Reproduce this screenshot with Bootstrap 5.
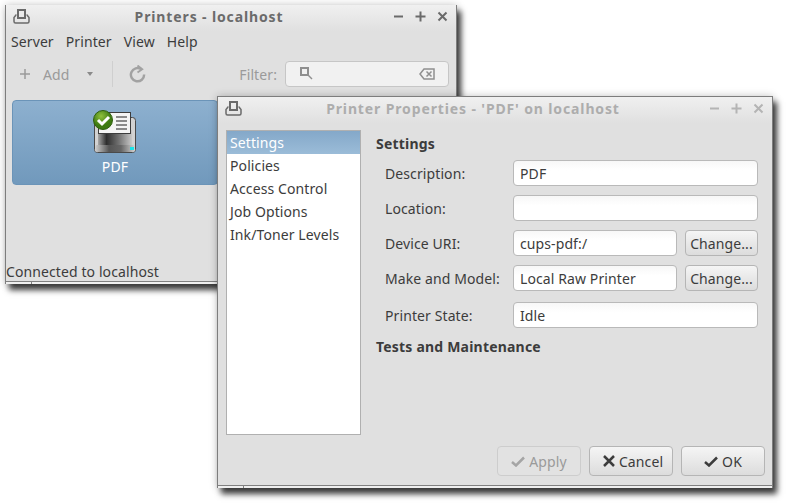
<!DOCTYPE html>
<html lang="en">
<head>
<meta charset="utf-8">
<title>Printers - localhost</title>
<link href="https://cdn.jsdelivr.net/npm/bootstrap@5.3.2/dist/css/bootstrap.min.css" rel="stylesheet">
<style>
html, body { margin: 0; width: 787px; height: 503px; overflow: hidden; background: #fff; }
body { font-family: "Noto Sans", "Open Sans", sans-serif; font-size: 14px; letter-spacing: .1px; color: #3c3c3c; position: relative; }
.desk-win { position: absolute; background: #e0e0e0; border: 1px solid #7d7d7d; border-bottom: 0; box-shadow: 0 0 8px rgba(0,0,0,.22), 4px 6px 6px rgba(0,0,0,.75); display: flex; flex-direction: column; }
.win-main { left: 5px; top: 5px; width: 452px; height: 279px; border-top: 0; }
.win-props { left: 217px; top: 96px; width: 556px; height: 392px; }
.title-bar { height: 26px; flex: none; background: linear-gradient(#f0f0f0, #e0e0e0); padding: 0 7px 4px 7px; display: flex; align-items: center; }
.title-text { flex: 1; margin-right: 4px; text-align: center; font-weight: 700; font-size: 14px; color: #6b6b6b; letter-spacing: .87px; }
.win-props .title-text { color: #adadad; }
.win-ctrls { display: flex; gap: 9px; }
.menu-row { display: flex; gap: 12px; padding: 1px 5px 0; line-height: 20px; color: #3c3c3c; }
.tool-row { display: flex; align-items: center; height: 32px; margin-top: 6px; padding: 0 7px 0 14px; color: #9a9a9a; }
.tool-add { margin-left: 13px; margin-right: 18px; }
.tool-sep { width: 1px; height: 26px; background: #cfcfcf; margin: 0 16px 0 19px; }
.filter-box { width: 164px; height: 26px; margin-left: 8px; background: #f1f1f1; border: 1px solid #c6c6c6; border-radius: 4px; display: flex; align-items: center; justify-content: space-between; padding: 0 13px 0 14px; }
.icon-area { flex: 1; padding: 10px 6px 0; }
.printer-tile { width: 206px; height: 85px; background: linear-gradient(#8db0cf, #7199bc); border: 1px solid #6b94b8; border-radius: 4px; color: #fff; text-align: center; padding-top: 9px; line-height: 20px; }
.printer-tile svg { display: block; margin: 0 auto 3px; }
.status-row { padding: 0; line-height: 19px; color: #3c3c3c; }
.grip-strip { height: 3px; flex: none; background: #efefef; border-top: 1px solid #808080; position: relative; }
.grip-strip::after { content: ""; position: absolute; left: 25px; top: 0; width: 1px; height: 2px; background: #808080; }
.props-body { flex: 1; display: flex; padding: 7px 7px 0 8px; gap: 15px; min-height: 0; }
.side-list { width: 135px; height: 305px; flex: none; background: #fff; border: 1px solid #b0b0b0; border-radius: 0; padding: 0; }
.side-list .list-group-item { border: 0; background: transparent; color: #3c3c3c; padding: 0 3px; line-height: 23px; border-radius: 0; }
.side-list .list-group-item.active { background: linear-gradient(#84a8c9, #9bbcd8); color: #fff; }
.props-form { flex: 1; padding-top: 4px; }
.form-head { font-weight: 700; color: #3c3c3c; line-height: 20px; letter-spacing: .2px; }
.form-rows { display: flex; flex-direction: column; gap: 9px; padding: 6px 7px 0 9px; }
.prop-row { display: flex; align-items: center; gap: 8px; height: 26px; }
.prop-row.state-row { margin-top: 2px; }
.prop-row label { width: 120px; flex: none; margin: 0; color: #3c3c3c; }
.prop-row .form-control { flex: 1; min-width: 0; height: 26px; min-height: 0; padding: 0 6px; font-size: 14px; letter-spacing: .1px; color: #3c3c3c; background: linear-gradient(#f7f7f7, #fff 40%); border: 1px solid #b9b9b9; border-radius: 4px; box-shadow: none; }
.gtk-btn { height: 30px; padding: 0; font-size: 14px; letter-spacing: .1px; color: #3c3c3c; background: linear-gradient(#f5f5f5, #dcdcdc); border: 1px solid #b5b5b5; border-radius: 4px; display: inline-flex; align-items: center; justify-content: center; gap: 4px; }
.prop-row .gtk-btn { width: 73px; height: 26px; flex: none; }
.gtk-btn:disabled { color: #9a9a9a; background: #e2e2e2; border-color: #cdcdcd; opacity: 1; }
.btn-bar { display: flex; justify-content: flex-end; gap: 8px; padding: 0 7px 9px 0; }
.btn-bar .gtk-btn { width: 84px; }
.tests-head { margin-top: 9px; }
</style>
</head>
<body>
<div class="desk-win win-main">
  <div class="title-bar">
    <svg width="17" height="17" viewBox="0 0 17 17" fill="none" stroke="#6a6a6a"><rect x="5" y="2" width="7" height="8" stroke-width="2"/><path d="M3.500 7H3L1 9.500v4A1.500 1.500 0 0 0 2.500 15h12a1.500 1.500 0 0 0 1.500-1.500v-4L14 7h-.5" stroke-width="1.500"/></svg>
    <div class="title-text">Printers - localhost</div>
    <div class="win-ctrls">
      <svg width="13" height="13" viewBox="0 0 13 13" stroke="#6a6a6a" stroke-width="2"><path d="M2 6.500h9"/></svg>
      <svg width="13" height="13" viewBox="0 0 13 13" stroke="#6a6a6a" stroke-width="2"><path d="M1.500 6.500h10M6.500 1.500v10"/></svg>
      <svg width="13" height="13" viewBox="0 0 13 13" stroke="#6a6a6a" stroke-width="2"><path d="M2.500 2.500l8 8M10.500 2.500l-8 8"/></svg>
    </div>
  </div>
  <div class="menu-row"><span>Server</span><span>Printer</span><span>View</span><span>Help</span></div>
  <div class="tool-row">
    <svg width="10" height="10" viewBox="0 0 10 10" stroke="#9a9a9a" stroke-width="1.500"><path d="M0 5h10M5 0v10"/></svg>
    <span class="tool-add">Add</span>
    <svg width="6" height="4" viewBox="0 0 6 4" fill="#8a8a8a"><path d="M0 0h6L3 4z"/></svg>
    <div class="tool-sep"></div>
    <svg width="17" height="18" viewBox="0 0 18 19" fill="none" stroke="#a2a2a2" stroke-width="2.600"><path d="M13 4.500A7 7 0 1 0 16 10"/><path d="M9 .5l5 4-5 3.500" stroke-width="2"/></svg>
    <span class="ms-auto">Filter:</span>
    <div class="filter-box">
      <svg width="14" height="14" viewBox="0 0 14 14" fill="none" stroke="#8f8f8f"><rect x="1" y="1" width="7" height="7" stroke-width="2"/><path d="M8 8l4 4" stroke-width="1.500"/></svg>
      <svg width="16" height="12" viewBox="0 0 16 12" fill="none" stroke="#8f8f8f" stroke-width="1.500"><path d="M5 1h10v10H5L1 6z"/><path d="M7.500 3.500l5 5M12.500 3.500l-5 5"/></svg>
    </div>
  </div>
  <div class="icon-area">
    <div class="printer-tile">
      <svg width="44" height="44" viewBox="0 0 44 44">
        <defs>
          <linearGradient id="pdark" x1="0" x2="1" y1="0" y2="0"><stop offset="0" stop-color="#a8a8a8"/><stop offset=".25" stop-color="#2e2e2e"/><stop offset=".6" stop-color="#707070"/><stop offset="1" stop-color="#c8c8c8"/></linearGradient>
          <linearGradient id="pbase" x1="0" x2="1" y1="0" y2="0"><stop offset="0" stop-color="#d0d0d0"/><stop offset=".35" stop-color="#555"/><stop offset=".65" stop-color="#666"/><stop offset="1" stop-color="#d4d4d4"/></linearGradient>
          <radialGradient id="pgreen" cx=".4" cy=".3"><stop offset="0" stop-color="#8fc13c"/><stop offset="1" stop-color="#3d7a12"/></radialGradient>
        </defs>
        <rect x="1.500" y="7.500" width="41" height="35" rx="3" fill="#d2d2d2" stroke="#4a4a4a"/>
        <rect x="5" y="20" width="34" height="16" fill="url(#pdark)"/>
        <rect x="2" y="35" width="40" height="7" rx="2" fill="url(#pbase)"/>
        <rect x="37" y="37" width="4" height="3" fill="#19e3e8"/>
        <rect x="5.500" y="2.500" width="32" height="21" fill="#f4f4f4" stroke="#3c3c3c"/>
        <path d="M23 7h11M23 11h11M23 15h11M23 19h11" stroke="#8a8a8a" stroke-width="2"/>
        <circle cx="10" cy="10" r="9.500" fill="url(#pgreen)" stroke="#2f5f10"/>
        <path d="M5 10l4 4 7-7" fill="none" stroke="#fff" stroke-width="3"/>
      </svg>
      PDF
    </div>
  </div>
  <div class="status-row">Connected to localhost</div>
  <div class="grip-strip"></div>
</div>

<div class="desk-win win-props">
  <div class="title-bar">
    <svg width="17" height="17" viewBox="0 0 17 17" fill="none" stroke="#6a6a6a"><rect x="5" y="2" width="7" height="8" stroke-width="2"/><path d="M3.500 7H3L1 9.500v4A1.500 1.500 0 0 0 2.500 15h12a1.500 1.500 0 0 0 1.500-1.500v-4L14 7h-.5" stroke-width="1.500"/></svg>
    <div class="title-text">Printer Properties - 'PDF' on localhost</div>
    <div class="win-ctrls">
      <svg width="13" height="13" viewBox="0 0 13 13" stroke="#b4b4b4" stroke-width="2"><path d="M2 6.500h9"/></svg>
      <svg width="13" height="13" viewBox="0 0 13 13" stroke="#b4b4b4" stroke-width="2"><path d="M1.500 6.500h10M6.500 1.500v10"/></svg>
      <svg width="13" height="13" viewBox="0 0 13 13" stroke="#b4b4b4" stroke-width="2"><path d="M2.500 2.500l8 8M10.500 2.500l-8 8"/></svg>
    </div>
  </div>
  <div class="props-body">
    <ul class="list-group side-list">
      <li class="list-group-item active">Settings</li>
      <li class="list-group-item">Policies</li>
      <li class="list-group-item">Access Control</li>
      <li class="list-group-item">Job Options</li>
      <li class="list-group-item">Ink/Toner Levels</li>
    </ul>
    <div class="props-form">
      <div class="form-head">Settings</div>
      <div class="form-rows">
        <div class="prop-row"><label>Description:</label><input class="form-control" value="PDF"></div>
        <div class="prop-row"><label>Location:</label><input class="form-control" value=""></div>
        <div class="prop-row"><label>Device URI:</label><input class="form-control" value="cups-pdf:/"><button class="btn gtk-btn">Change...</button></div>
        <div class="prop-row"><label>Make and Model:</label><input class="form-control" value="Local Raw Printer"><button class="btn gtk-btn">Change...</button></div>
        <div class="prop-row state-row"><label>Printer State:</label><input class="form-control" value="Idle"></div>
      </div>
      <div class="form-head tests-head">Tests and Maintenance</div>
    </div>
  </div>
  <div class="btn-bar">
    <button class="btn gtk-btn" disabled><svg width="14" height="11" viewBox="0 0 14 11" fill="none" stroke="#a5a5a5" stroke-width="2.500"><path d="M1 6l4 3.500L13 1.500"/></svg>Apply</button>
    <button class="btn gtk-btn ps-1"><svg width="12" height="12" viewBox="0 0 12 12" fill="none" stroke="#3c3c3c" stroke-width="2.500"><path d="M1 1l10 10M11 1L1 11"/></svg>Cancel</button>
    <button class="btn gtk-btn"><svg width="14" height="11" viewBox="0 0 14 11" fill="none" stroke="#3c3c3c" stroke-width="2.500"><path d="M1 6l4 3.500L13 1.500"/></svg>OK</button>
  </div>
  <div class="grip-strip"></div>
</div>
</body>
</html>
